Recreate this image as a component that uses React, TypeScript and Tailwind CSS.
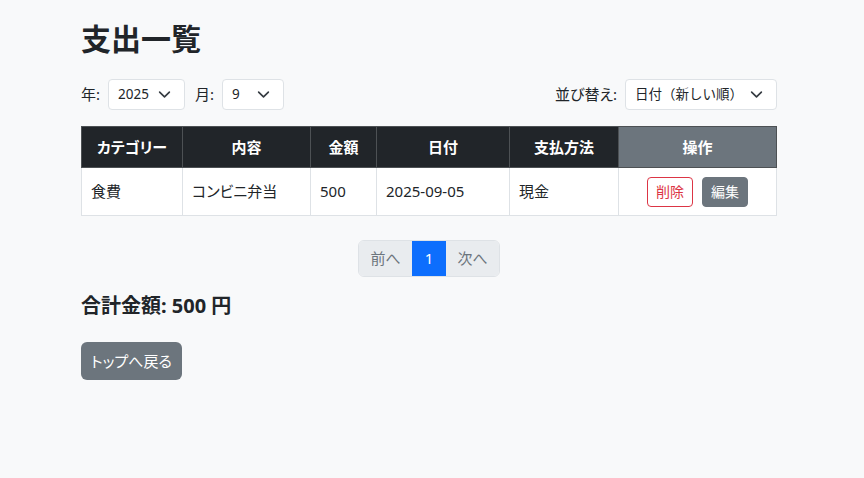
import React from "react";

const Chevron = () => (
  <svg className="w-[13px] h-[13px]" viewBox="0 0 16 16" fill="none">
    <path d="M2 5l6 6 6-6" stroke="#343a40" strokeWidth="2" strokeLinecap="round" strokeLinejoin="round" />
  </svg>
);

const Select = ({ value, width }: { value: string; width: string }) => (
  <div
    className={`${width} h-[31px] flex items-center justify-between bg-white border border-[#dee2e6] rounded-[4px] pl-[9px] pr-[13px] text-[13.5px] text-[#212529] [font-feature-settings:normal]`}
  >
    <span>{value}</span>
    <Chevron />
  </div>
);

export default function App() {
  const rows = [
    { category: "食費", content: "コンビニ弁当", amount: "500", date: "2025-09-05", method: "現金" },
  ];

  return (
    <div
      className="min-h-[478px] bg-[#f8f9fa] text-[#212529] [font-feature-settings:'palt']"
      style={{ fontFamily: '"Noto Sans", "Noto Sans CJK JP", sans-serif' }}
    >
      <div className="w-[696px] ml-[81px] pt-[21px]">
        <h2 className="text-[30px] font-bold leading-[1.2] mb-[22px]">支出一覧</h2>

        <div className="flex items-center justify-between mb-[16px] text-[15px]">
          <div className="flex items-center">
            <span className="mr-[8px]">年:</span>
            <Select value="2025" width="w-[77px]" />
            <span className="ml-[10px] mr-[8px]">月:</span>
            <Select value="9" width="w-[62px]" />
          </div>
          <div className="flex items-center">
            <span className="mr-[8px]">並び替え:</span>
            <Select value="日付（新しい順）" width="w-[152px]" />
          </div>
        </div>

        <table className="w-full border-collapse text-[15px]">
          <thead>
            <tr className="h-[41px] text-white font-bold">
              <th className="w-[101px] bg-[#212529] border border-[#4d5154]">カテゴリー</th>
              <th className="w-[128px] bg-[#212529] border border-[#4d5154]">内容</th>
              <th className="w-[66px] bg-[#212529] border border-[#4d5154]">金額</th>
              <th className="w-[133px] bg-[#212529] border border-[#4d5154]">日付</th>
              <th className="w-[109px] bg-[#212529] border border-[#4d5154]">支払方法</th>
              <th className="bg-[#6c757d] border border-[#4d5154]">操作</th>
            </tr>
          </thead>
          <tbody>
            {rows.map((r, i) => (
              <tr key={i} className="h-[48px] bg-white">
                <td className="border border-[#dee2e6] px-[9px]">{r.category}</td>
                <td className="border border-[#dee2e6] px-[9px]">{r.content}</td>
                <td className="border border-[#dee2e6] px-[9px]">{r.amount}</td>
                <td className="border border-[#dee2e6] px-[9px]">{r.date}</td>
                <td className="border border-[#dee2e6] px-[9px]">{r.method}</td>
                <td className="border border-[#dee2e6]">
                  <div className="flex justify-center gap-[9px]">
                    <button className="h-[30px] px-[8px] text-[14px] text-[#dc3545] border border-[#dc3545] rounded-[4px] bg-white">
                      削除
                    </button>
                    <button className="h-[30px] px-[8px] text-[14px] text-white bg-[#6c757d] border border-[#6c757d] rounded-[4px]">
                      編集
                    </button>
                  </div>
                </td>
              </tr>
            ))}
          </tbody>
        </table>

        <div className="flex justify-center mt-[24px]">
          <div className="flex h-[37px] text-[15px] border border-[#dee2e6] rounded-[6px] overflow-hidden">
            <span className="w-[53px] flex items-center justify-center bg-[#e9ecef] text-[#6c757d]">前へ</span>
            <span className="w-[34px] flex items-center justify-center bg-[#0d6efd] text-white">1</span>
            <span className="w-[53px] flex items-center justify-center bg-[#e9ecef] text-[#6c757d]">次へ</span>
          </div>
        </div>

        <h4 className="text-[20px] font-bold mt-[14px] mb-[21px]">合計金額: 500 円</h4>

        <button className="h-[38px] w-[101px] text-[15px] text-white bg-[#6c757d] rounded-[6px]">
          トップへ戻る
        </button>
      </div>
    </div>
  );
}
